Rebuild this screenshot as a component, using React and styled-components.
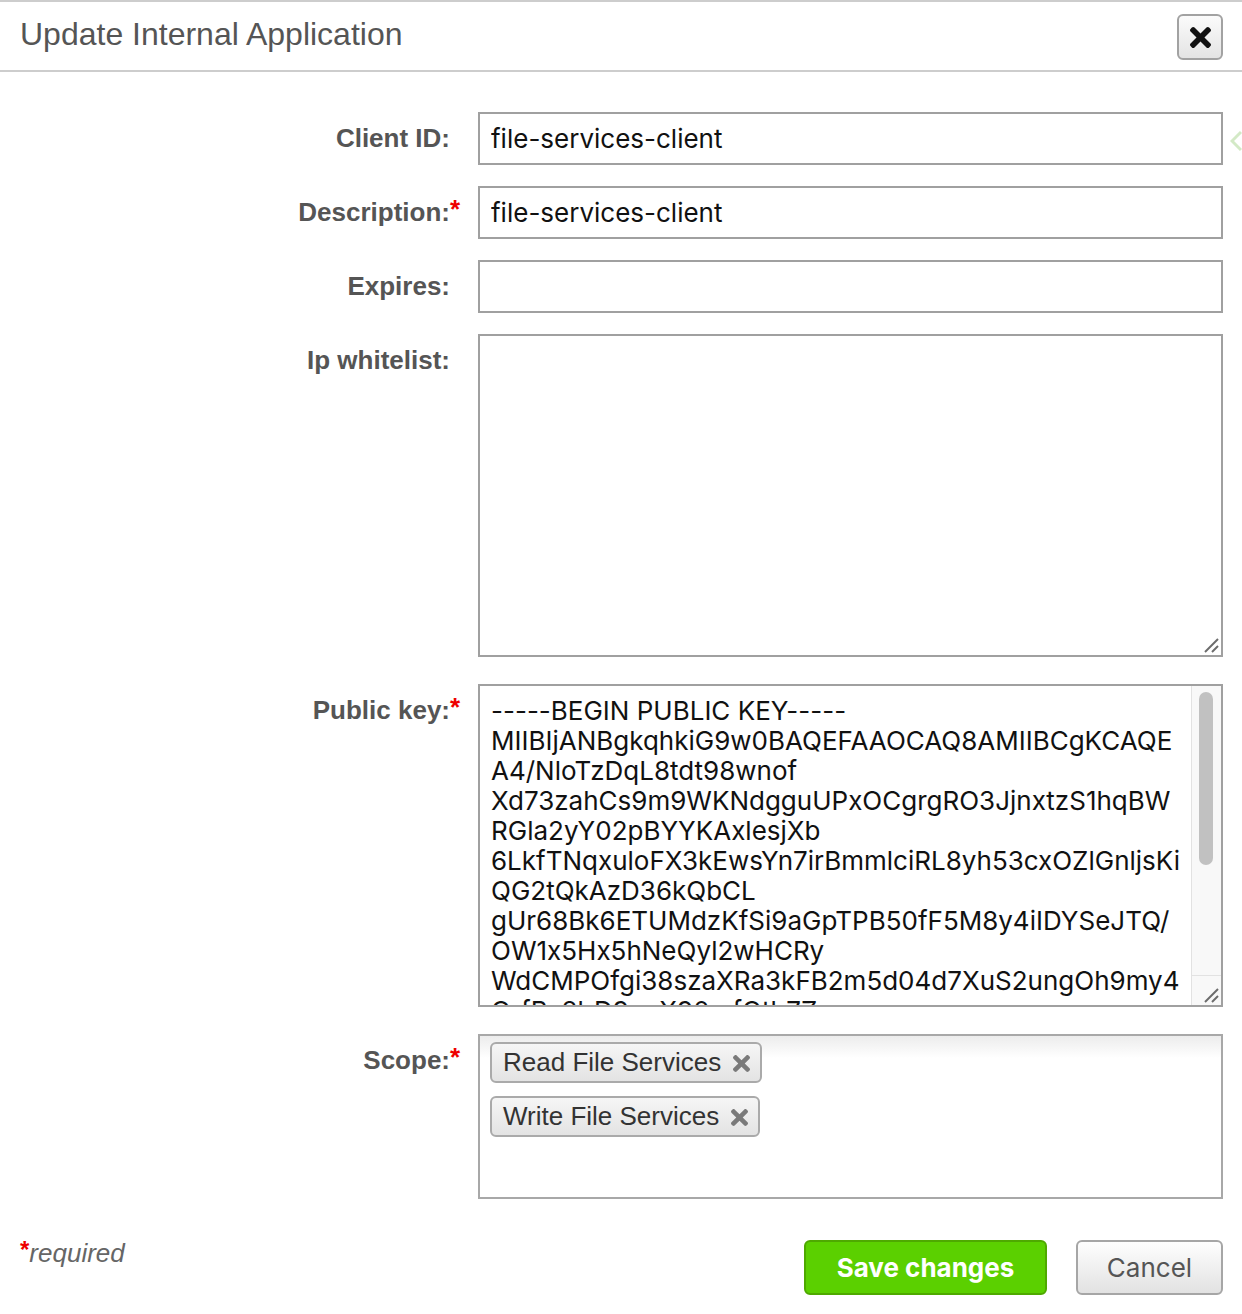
import React from "react";
import styled, { createGlobalStyle } from "styled-components";

const GlobalStyle = createGlobalStyle`
  html, body { margin: 0; padding: 0; background: #fff; }
  body { font-family: "Liberation Sans", Arial, sans-serif; }
  * { box-sizing: border-box; }
`;

const Page = styled.div`
  width: 1242px;
  min-height: 1314px;
  border-top: 2px solid #cdcdcd;
  background: #fff;
`;

const Header = styled.div`
  height: 70px;
  display: flex;
  align-items: center;
  justify-content: space-between;
  padding: 2px 19px 0 20px;
  border-bottom: 2px solid #cdcdcd;
`;

const Title = styled.h1`
  margin: -5px 0 0 0;
  font-family: "Liberation Sans", Arial, sans-serif;
  font-weight: normal;
  font-size: 32px;
  color: #555;
`;

const CloseButton = styled.button`
  width: 46px;
  height: 46px;
  display: flex;
  align-items: center;
  justify-content: center;
  padding: 0;
  border: 2px solid #a2a2a2;
  border-radius: 6px;
  background: linear-gradient(#fbfbfb, #e4e4e4);
  color: #111;
  cursor: pointer;
`;

const Form = styled.div`
  padding-top: 40px;
  display: flex;
  flex-direction: column;
`;

const Row = styled.div`
  position: relative;
  display: grid;
  grid-template-columns: 450px 745px;
  column-gap: 28px;
  align-items: start;
  margin-bottom: ${(p) => p.$gap}px;
`;

const Label = styled.label`
  display: flex;
  justify-content: flex-end;
  height: 53px;
  line-height: 53px;
  font-family: "Liberation Sans", Arial, sans-serif;
  font-weight: bold;
  font-size: 26px;
  color: #555;
  white-space: nowrap;
`;

const Star = styled.span`
  color: #e00;
  width: 9px;
  margin-right: -9px;
  font-weight: bold;
  position: relative;
  top: -3px;
`;

const fieldFont = `
  font-family: Inter, "Liberation Sans", Arial, sans-serif;
  font-size: 26px;
  font-feature-settings: "calt" 0;
  color: #111;
`;

const TextInput = styled.input`
  ${fieldFont}
  width: 745px;
  height: 53px;
  border: 2px solid #a0a0a0;
  border-radius: 0;
  padding: 0 11px;
  outline: none;
  background: #fff;
`;

const FieldWrap = styled.div`
  position: relative;
  width: 745px;
  height: 323px;
`;

const TextArea = styled.textarea`
  ${fieldFont}
  display: block;
  width: 745px;
  height: 323px;
  border: 2px solid #a0a0a0;
  border-radius: 0;
  padding: 10px ${(p) => (p.$scroll ? 34 : 11)}px 8px 11px;
  line-height: 30px;
  outline: none;
  resize: none;
  background: #fff;
  overflow: hidden;
  white-space: pre;
`;

const ScrollTrack = styled.div`
  position: absolute;
  top: 2px;
  right: 2px;
  width: 30px;
  height: 289px;
  background: #f8f8f8;
  border-left: 1px solid #e2e2e2;
`;

const ScrollThumb = styled.div`
  position: absolute;
  top: 6px;
  left: 7px;
  width: 14px;
  height: 173px;
  border-radius: 7px;
  background: #c1c1c1;
`;

const ScrollCorner = styled.div`
  position: absolute;
  right: 2px;
  bottom: 2px;
  width: 30px;
  height: 30px;
  background: #f8f8f8;
  border-left: 1px solid #e2e2e2;
  border-top: 1px solid #e2e2e2;
`;

const Grip = styled.svg`
  position: absolute;
  right: 2px;
  bottom: 2px;
`;

const ScopeBox = styled.div`
  width: 745px;
  height: 165px;
  border: 2px solid #a8a8a8;
  background: linear-gradient(#ececec 0px, #fff 22px);
  padding: 6px 10px;
  display: flex;
  flex-direction: column;
  align-items: flex-start;
  gap: 13px;
`;

const Tag = styled.div`
  height: 41px;
  display: flex;
  align-items: center;
  gap: 12px;
  padding: 0 10px 0 11px;
  border: 2px solid #aaa;
  border-radius: 6px;
  background: linear-gradient(#f6f6f6, #e3e3e3);
  font-family: "Liberation Sans", Arial, sans-serif;
  font-size: 26px;
  color: #333;
`;

const TagRemove = styled.span`
  display: flex;
  color: #7a7a7a;
  margin-top: 1px;
`;

const Footer = styled.div`
  margin-top: 41px;
  padding: 0 19px 0 20px;
  display: flex;
  justify-content: space-between;
  align-items: flex-start;
`;

const Required = styled.div`
  font-family: "Liberation Sans", Arial, sans-serif;
  font-style: italic;
  font-size: 26px;
  color: #666;
  margin-top: -2px;
`;

const RequiredStar = styled.span`
  color: #e00;
  font-style: normal;
  font-weight: bold;
  position: relative;
  top: -4px;
  font-size: 24px;
`;

const Buttons = styled.div`
  display: flex;
  gap: 29px;
`;

const Button = styled.button`
  height: 55px;
  width: ${(p) => p.$w}px;
  border-radius: 6px;
  font-family: Inter, "Liberation Sans", Arial, sans-serif;
  font-size: 26px;
  cursor: pointer;
  ${(p) =>
    p.$primary
      ? `
    background: #5bd000;
    border: 2px solid #4ea900;
    color: #fff;
    font-weight: bold;
  `
      : `
    background: linear-gradient(#fefefe, #e2e2e2);
    border: 2px solid #a6a6a6;
    color: #555;
    font-weight: normal;
  `}
`;

const EdgeHint = styled.svg`
  position: absolute;
  left: 1230px;
  top: 18px;
`;

const XIcon = ({ size, color }) => (
  <svg width={size} height={size} viewBox="0 80 352 352" fill={color}>
    <path d="M242.72 256l100.07-100.07c12.28-12.28 12.28-32.19 0-44.48l-22.24-22.24c-12.28-12.28-32.19-12.28-44.48 0L176 189.28 75.93 89.21c-12.28-12.28-32.19-12.28-44.48 0L9.21 111.45c-12.28 12.28-12.28 32.19 0 44.48L109.28 256 9.21 356.07c-12.28 12.28-12.28 32.19 0 44.48l22.24 22.24c12.28 12.28 32.2 12.28 44.48 0L176 322.72l100.07 100.07c12.28 12.28 32.2 12.28 44.48 0l22.24-22.24c12.28-12.28 12.28-32.19 0-44.48L242.72 256z" />
  </svg>
);

const ResizeGrip = () => (
  <Grip width="20" height="20" viewBox="0 0 20 20">
    <line x1="4" y1="17" x2="17" y2="4" stroke="#6c6c6c" strokeWidth="2" />
    <line x1="11" y1="17" x2="17" y2="11" stroke="#6c6c6c" strokeWidth="2" />
  </Grip>
);

const publicKey = [
  "-----BEGIN PUBLIC KEY-----",
  "MIIBIjANBgkqhkiG9w0BAQEFAAOCAQ8AMIIBCgKCAQE",
  "A4/NloTzDqL8tdt98wnof",
  "Xd73zahCs9m9WKNdgguUPxOCgrgRO3JjnxtzS1hqBW",
  "RGla2yY02pBYYKAxlesjXb",
  "6LkfTNqxuloFX3kEwsYn7irBmmlciRL8yh53cxOZlGnljsKi",
  "QG2tQkAzD36kQbCL",
  "gUr68Bk6ETUMdzKfSi9aGpTPB50fF5M8y4iIDYSeJTQ/",
  "OW1x5Hx5hNeQyl2wHCRy",
  "WdCMPOfgi38szaXRa3kFB2m5d04d7XuS2ungOh9my4",
  "QrfBs8lrD9ooX90mfOtb7Z",
  "n2xWq7KpL0vR3tYc9FhJ8sDmUe4aGbN6iZoPwQ1yTkXrV5lHjC",
  "2dEuMf7gOqIs",
  "vT8wIDAQAB",
  "-----END PUBLIC KEY-----",
].join("\n");

export default function App() {
  return (
    <>
      <GlobalStyle />
      <Page>
        <Header>
          <Title>Update Internal Application</Title>
          <CloseButton aria-label="Close">
            <XIcon size={21} color="#111" />
          </CloseButton>
        </Header>
        <Form>
          <Row $gap={21}>
            <Label>Client ID:</Label>
            <TextInput defaultValue="file-services-client" />
            <EdgeHint width="12" height="22" viewBox="0 0 12 22">
              <polyline points="11,2 2,11 11,20" fill="none" stroke="#d3e9c6" strokeWidth="3" />
            </EdgeHint>
          </Row>
          <Row $gap={21}>
            <Label>
              Description:<Star>*</Star>
            </Label>
            <TextInput defaultValue="file-services-client" />
          </Row>
          <Row $gap={21}>
            <Label>Expires:</Label>
            <TextInput defaultValue="" />
          </Row>
          <Row $gap={27}>
            <Label>Ip whitelist:</Label>
            <FieldWrap>
              <TextArea defaultValue="" />
              <ResizeGrip />
            </FieldWrap>
          </Row>
          <Row $gap={27}>
            <Label>
              Public key:<Star>*</Star>
            </Label>
            <FieldWrap>
              <TextArea $scroll wrap="off" defaultValue={publicKey} />
              <ScrollTrack>
                <ScrollThumb />
              </ScrollTrack>
              <ScrollCorner />
              <ResizeGrip />
            </FieldWrap>
          </Row>
          <Row $gap={0}>
            <Label>
              Scope:<Star>*</Star>
            </Label>
            <ScopeBox>
              <Tag>
                Read File Services
                <TagRemove>
                  <XIcon size={17} color="currentColor" />
                </TagRemove>
              </Tag>
              <Tag>
                Write File Services
                <TagRemove>
                  <XIcon size={17} color="currentColor" />
                </TagRemove>
              </Tag>
            </ScopeBox>
          </Row>
        </Form>
        <Footer>
          <Required>
            <RequiredStar>*</RequiredStar>required
          </Required>
          <Buttons>
            <Button $primary $w={243}>Save changes</Button>
            <Button $w={147}>Cancel</Button>
          </Buttons>
        </Footer>
      </Page>
    </>
  );
}
